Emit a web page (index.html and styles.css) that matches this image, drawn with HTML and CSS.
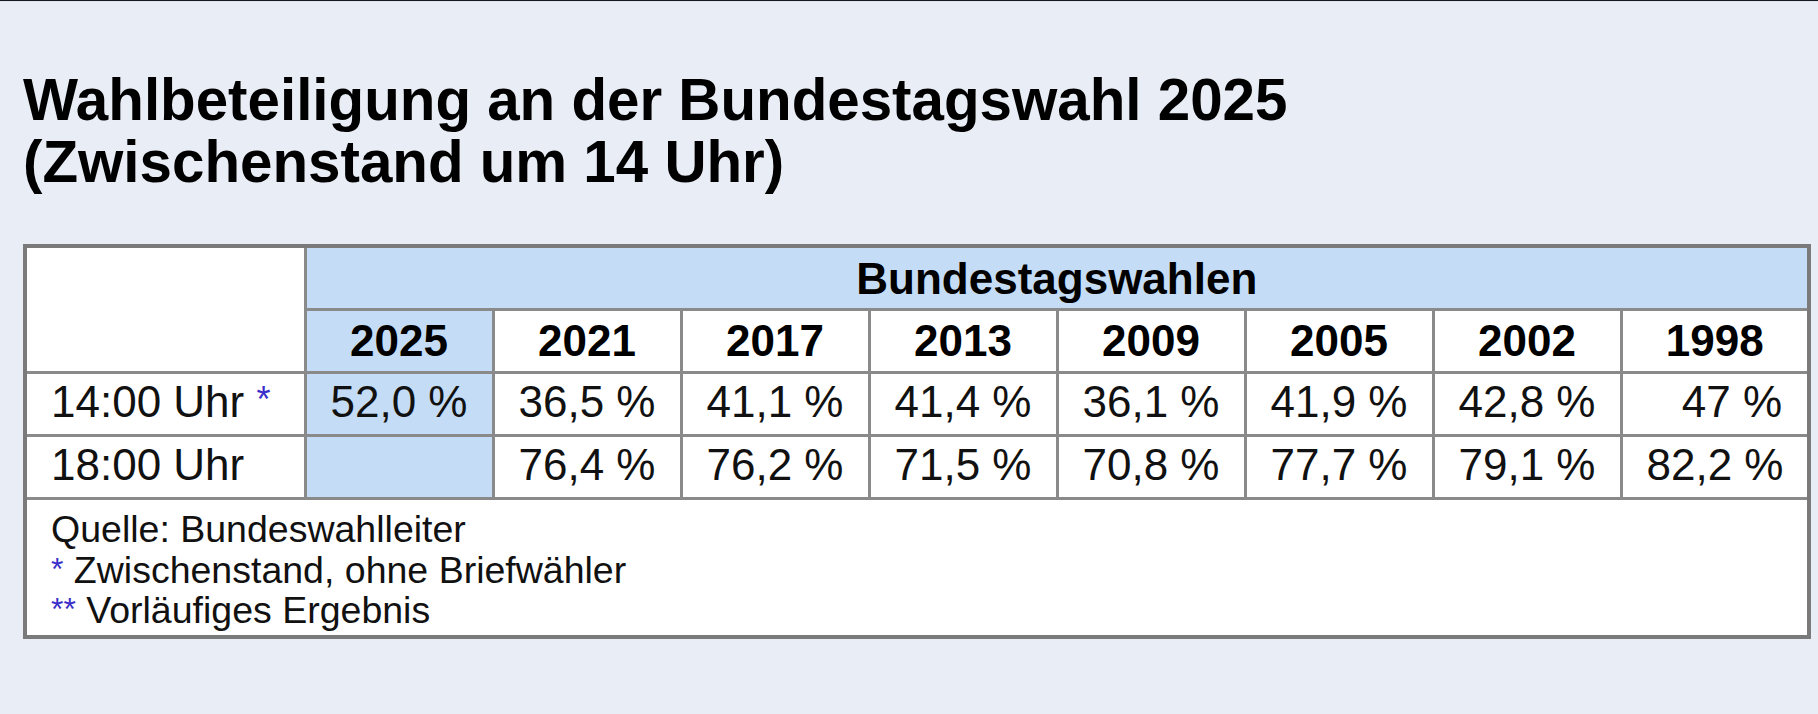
FILE: index.html
```html
<!DOCTYPE html>
<html lang="de">
<head>
<meta charset="utf-8">
<title>Wahlbeteiligung an der Bundestagswahl 2025</title>
<link rel="stylesheet" href="styles.css">
</head>
<body>
<div class="topbar"></div>
<main class="page">
  <h1 class="title">Wahlbeteiligung an der Bundestagswahl 2025<br>(Zwischenstand um 14 Uhr)</h1>
  <table class="turnout">
    <colgroup>
      <col class="col-label">
      <col class="col-year"><col class="col-year"><col class="col-year"><col class="col-year">
      <col class="col-year"><col class="col-year"><col class="col-year"><col class="col-year">
    </colgroup>
    <thead>
      <tr>
        <th class="blank" rowspan="2"></th>
        <th class="group" colspan="8">Bundestagswahlen</th>
      </tr>
      <tr class="years">
        <th class="current">2025</th>
        <th>2021</th>
        <th>2017</th>
        <th>2013</th>
        <th>2009</th>
        <th>2005</th>
        <th>2002</th>
        <th>1998</th>
      </tr>
    </thead>
    <tbody>
      <tr class="data">
        <td class="label">14:00 Uhr <span class="star">*</span></td>
        <td class="current">52,0 %</td>
        <td>36,5 %</td>
        <td>41,1 %</td>
        <td>41,4 %</td>
        <td>36,1 %</td>
        <td>41,9 %</td>
        <td>42,8 %</td>
        <td>47 %</td>
      </tr>
      <tr class="data">
        <td class="label">18:00 Uhr</td>
        <td class="current"></td>
        <td>76,4 %</td>
        <td>76,2 %</td>
        <td>71,5 %</td>
        <td>70,8 %</td>
        <td>77,7 %</td>
        <td>79,1 %</td>
        <td>82,2 %</td>
      </tr>
      <tr>
        <td class="notes" colspan="9">
          <div>Quelle: Bundeswahlleiter</div>
          <div><span class="star">*</span> Zwischenstand, ohne Briefwähler</div>
          <div><span class="star">**</span> Vorläufiges Ergebnis</div>
        </td>
      </tr>
    </tbody>
  </table>
</main>
</body>
</html>
```
FILE: styles.css
```css
html, body {
  margin: 0;
  padding: 0;
}

body {
  background: #e9edf5;
  font-family: "Liberation Sans", Arial, sans-serif;
  color: #111;
  width: 1818px;
  height: 714px;
  overflow: hidden;
}

.topbar {
  height: 1px;
  background: #151925;
  border-bottom: 1px solid #dfe3ec;
}

.page {
  padding: 67px 0 0 23px;
}

.title {
  margin: 0 0 51px 0;
  font-size: 58.3px;
  line-height: 62px;
  font-weight: bold;
  color: #000;
}

.turnout {
  width: 1784px;
  table-layout: fixed;
  border-collapse: collapse;
  border: 4px solid #7a7a7a;
  background: #fff;
}

.col-label {
  width: 280px;
}

.col-year {
  width: 188px;
}

.turnout th,
.turnout td {
  border: 3px solid #8a8a8a;
  font-size: 44px;
  line-height: 50px;
  padding: 5px 25px 5px 24px;
  vertical-align: middle;
  white-space: nowrap;
}

.turnout th {
  font-weight: bold;
  color: #000;
  text-align: center;
  padding-left: 0;
  padding-right: 0;
}

.turnout .group {
  background: #c4dcf6;
  height: 50px;
  padding-top: 6px;
  padding-bottom: 4px;
}

.turnout .blank {
  background: #fff;
}

.turnout .current {
  background: #c4dcf6;
}

.data td {
  text-align: right;
  padding-top: 3px;
  padding-bottom: 7px;
}

.data td.label {
  text-align: left;
}

.star {
  color: #3a2fc8;
  font-size: 0.82em;
  vertical-align: 0.15em;
  line-height: 0;
}

.turnout td.notes {
  font-size: 37.5px;
  line-height: 40.5px;
  padding: 9px 24px 4px 24px;
  text-align: left;
}

.notes .star {
  font-size: 0.85em;
  vertical-align: 0.1em;
}
```
